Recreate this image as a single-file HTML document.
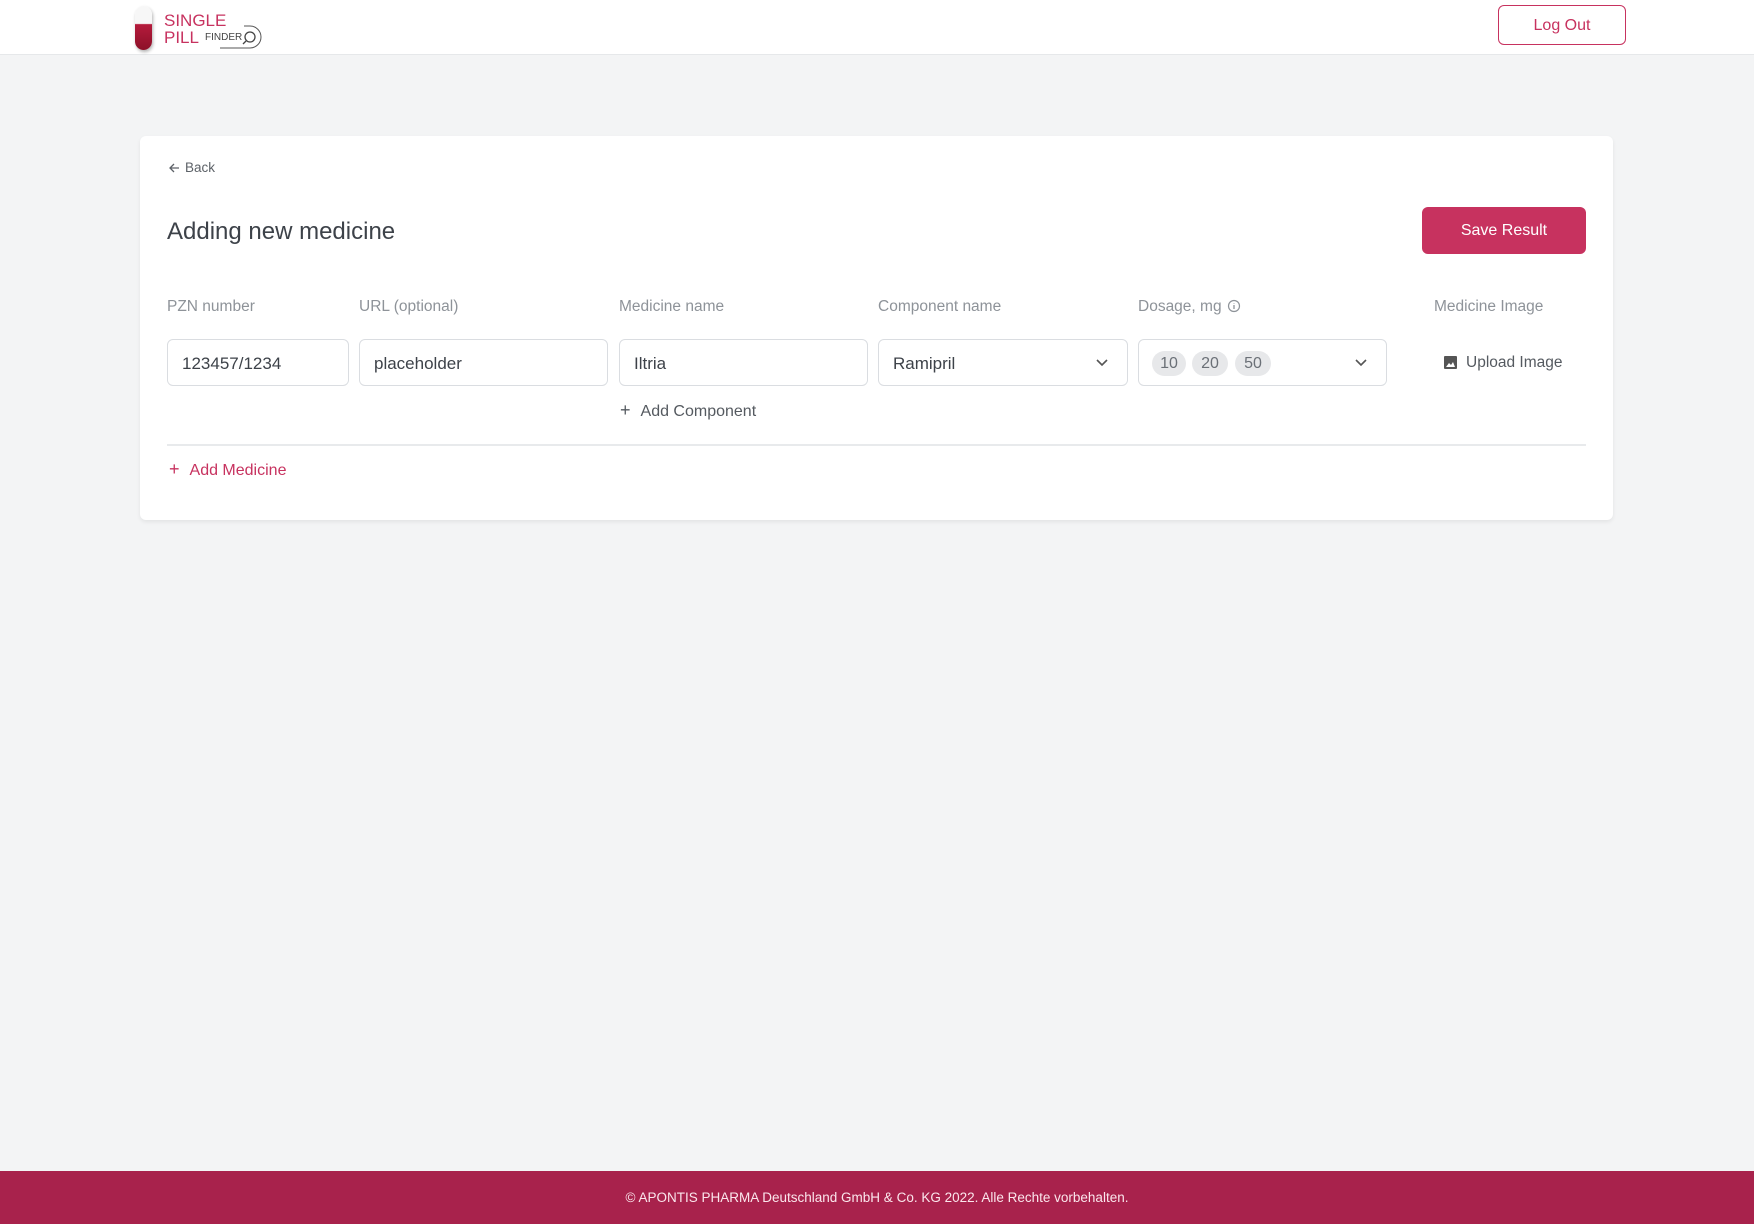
<!DOCTYPE html>
<html><head><meta charset="utf-8"><style>
*{box-sizing:border-box;margin:0;padding:0}
body{width:1754px;height:1224px;background:#f3f4f5;font-family:"Liberation Sans",sans-serif;position:relative;overflow:hidden;color:#3d4249}
.abs{position:absolute}
header{position:absolute;left:0;top:0;width:1754px;height:55px;background:#fff;border-bottom:1px solid #e6e8ea}
.card{position:absolute;left:140px;top:136px;width:1473px;height:384px;background:#fff;border-radius:6px;box-shadow:0 2px 4px rgba(0,0,0,.07)}
.lbl{position:absolute;top:298px;font-size:15.5px;color:#8e9399}
.inp{position:absolute;top:339px;height:47px;border:1px solid #dadde1;border-radius:6px;font-size:17px;color:#3d4249;padding:0 14px;line-height:47px}
.chip{position:absolute;top:351px;height:25px;border-radius:13px;background:#e7e8ea;font-size:16px;color:#6b7077;text-align:center;line-height:25px}
footer{position:absolute;left:0;top:1171px;width:1754px;height:53px;background:#a8224c;color:#fbe6ec;font-size:13.5px;text-align:center;line-height:53px}
</style></head><body>
<header>
<div class="abs" style="left:135px;top:6px;width:17px;height:44px;border-radius:9px;background:linear-gradient(#f7f7f7 0 40%,#b51b3c 42%,#8c1028);box-shadow:1px 2px 3px rgba(0,0,0,.3)"></div>
<div class="abs" style="left:164px;top:12px;font-size:17px;color:#c7325f;line-height:17px">SINGLE<br>PILL</div>
<div class="abs" style="left:205px;top:32px;font-size:10px;color:#444">FINDER</div>
<svg class="abs" style="left:218px;top:24px" width="45" height="26"><path d="M2 24 H32 A11 11 0 0 0 32 2 H26" fill="none" stroke="#555" stroke-width="1"/><circle cx="32" cy="13" r="5" fill="none" stroke="#444" stroke-width="1.3"/><path d="M28 17 L25 20" stroke="#444" stroke-width="1.3"/></svg>
<div class="abs" style="left:1498px;top:5px;width:128px;height:40px;border:1px solid #c7325f;border-radius:6px;color:#c7325f;font-size:16px;text-align:center;line-height:40px">Log Out</div>
</header>
<div class="card"></div>
<svg class="abs" style="left:168px;top:162px" width="12" height="12"><path d="M11 6H2M6 2L2 6l4 4" fill="none" stroke="#5d6268" stroke-width="1.3"/></svg>
<div class="abs" style="left:185px;top:160px;font-size:13.5px;color:#5d6268">Back</div>
<div class="abs" style="left:167px;top:218px;font-size:24px;color:#3d4249">Adding new medicine</div>
<div class="abs" style="left:1422px;top:207px;width:164px;height:47px;background:#c7325f;border-radius:6px;color:#fff;font-size:16px;text-align:center;line-height:47px">Save Result</div>
<div class="lbl" style="left:167px">PZN number</div>
<div class="lbl" style="left:359px">URL (optional)</div>
<div class="lbl" style="left:619px">Medicine name</div>
<div class="lbl" style="left:878px">Component name</div>
<div class="lbl" style="left:1138px">Dosage, mg <svg width="14" height="14" style="vertical-align:-2px;margin-left:1px"><circle cx="7" cy="7" r="5.5" fill="none" stroke="#8e9399" stroke-width="1.2"/><path d="M7 6v4M7 4v.5" stroke="#8e9399" stroke-width="1.3"/></svg></div>
<div class="lbl" style="left:1434px">Medicine Image</div>
<div class="inp" style="left:167px;width:182px">123457/1234</div>
<div class="inp" style="left:359px;width:249px">placeholder</div>
<div class="inp" style="left:619px;width:249px">Iltria</div>
<div class="inp" style="left:878px;width:250px">Ramipril</div>
<svg class="abs" style="left:1096px;top:358px" width="12" height="10"><path d="M1 2l5 5 5-5" fill="none" stroke="#555" stroke-width="1.6"/></svg>
<div class="inp" style="left:1138px;width:249px"></div>
<div class="chip" style="left:1152px;width:34px">10</div>
<div class="chip" style="left:1192px;width:36px">20</div>
<div class="chip" style="left:1235px;width:36px">50</div>
<svg class="abs" style="left:1355px;top:358px" width="12" height="10"><path d="M1 2l5 5 5-5" fill="none" stroke="#555" stroke-width="1.6"/></svg>
<svg class="abs" style="left:1444px;top:356px" width="13" height="13"><rect width="13" height="13" rx="1" fill="#555"/><path d="M2 11l3-4 2 2 2-3 2 5z" fill="#fff"/></svg>
<div class="abs" style="left:1466px;top:354px;font-size:15.5px;color:#555a60">Upload Image</div>
<div class="abs" style="left:620px;top:400px;font-size:16px;color:#555a60"><span style="font-size:18px;margin-right:10px">+</span>Add Component</div>
<div class="abs" style="left:167px;top:444px;width:1419px;height:2px;background:#e8eaec"></div>
<div class="abs" style="left:169px;top:459px;font-size:16px;color:#c7325f"><span style="font-size:18px;margin-right:10px">+</span>Add Medicine</div>
<footer>© APONTIS PHARMA Deutschland GmbH &amp; Co. KG 2022. Alle Rechte vorbehalten.</footer>
</body></html>
